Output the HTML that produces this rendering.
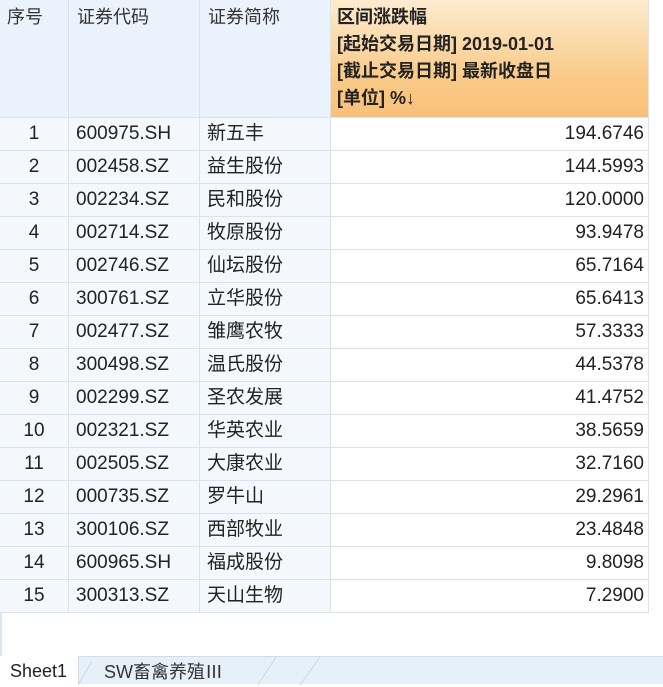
<!DOCTYPE html>
<html><head><meta charset="utf-8"><style>
*{margin:0;padding:0;box-sizing:border-box}
body{width:663px;height:684px;background:#fff;font-family:"Liberation Sans","Noto Sans CJK SC",sans-serif;font-size:19px;color:#222;position:relative;overflow:hidden}
.c{position:absolute;border-right:1px solid #d8e3ef;border-bottom:1px solid #d8e3ef;white-space:nowrap;line-height:32px}
.h{background:#eaf2fb;line-height:27px;padding-top:4px;color:#333;font-size:18px}
.ho{background:linear-gradient(#fdebd0,#f9c985 70%,#f8c07a);font-weight:bold;line-height:27px;padding-top:4px;padding-left:6px;color:#222;font-size:18px}
.b{background:#f4f8fd}
.w{background:#fff;text-align:right;padding-right:4px}
#tabs{position:absolute;left:0;top:656px;width:663px;height:28px;background:#e6f0f9;border-top:1px solid #cfdcea}
</style></head><body>
<div style="position:absolute;left:0;top:0;width:2px;height:656px;background:#dbe7f3"></div>
<div class="c h" style="left:0;top:0;width:69px;height:118px;padding-left:7px">序号</div>
<div class="c h" style="left:69px;top:0;width:131px;height:118px;padding-left:8px">证券代码</div>
<div class="c h" style="left:200px;top:0;width:131px;height:118px;padding-left:8px">证券简称</div>
<div class="c ho" style="left:331px;top:0;width:318px;height:118px">区间涨跌幅<br>[起始交易日期] 2019-01-01<br>[截止交易日期] 最新收盘日<br>[单位] %↓</div>
<div id="rows"></div>
<div id="tabs">
<div style="position:absolute;left:0;top:-1px;width:79px;height:29px;background:#fff;border-right:1px solid #cfdcea;padding-left:10px;line-height:30px;font-size:18px">Sheet1</div>
<div style="position:absolute;left:104px;top:0;line-height:30px;font-size:18px;color:#333">SW畜禽养殖Ⅲ</div>
<svg style="position:absolute;left:70px;top:0" width="260" height="28"><path d="M8 28 L22 4 M188 28 L206 0 M230 28 L250 0" stroke="#c9d7e6" fill="none"/></svg>
</div>
<script>
var d=[["600975.SH","新五丰","194.6746"],["002458.SZ","益生股份","144.5993"],["002234.SZ","民和股份","120.0000"],["002714.SZ","牧原股份","93.9478"],["002746.SZ","仙坛股份","65.7164"],["300761.SZ","立华股份","65.6413"],["002477.SZ","雏鹰农牧","57.3333"],["300498.SZ","温氏股份","44.5378"],["002299.SZ","圣农发展","41.4752"],["002321.SZ","华英农业","38.5659"],["002505.SZ","大康农业","32.7160"],["000735.SZ","罗牛山","29.2961"],["300106.SZ","西部牧业","23.4848"],["600965.SH","福成股份","9.8098"],["300313.SZ","天山生物","7.2900"]];
var h="";d.forEach(function(r,i){var t=118+i*33;
h+='<div class="c b" style="left:0;top:'+t+'px;width:69px;height:33px;text-align:center">'+(i+1)+'</div>';
h+='<div class="c b" style="left:69px;top:'+t+'px;width:131px;height:33px;padding-left:7px">'+r[0]+'</div>';
h+='<div class="c b" style="left:200px;top:'+t+'px;width:131px;height:33px;padding-left:7px">'+r[1]+'</div>';
h+='<div class="c w" style="left:331px;top:'+t+'px;width:318px;height:33px">'+r[2]+'</div>';});
document.getElementById("rows").innerHTML=h;
</script>
</body></html>
